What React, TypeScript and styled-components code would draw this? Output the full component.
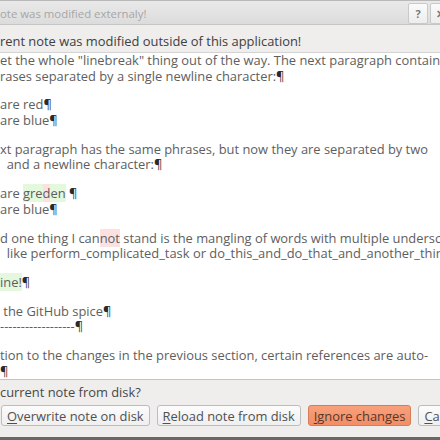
import React from 'react';
import styled, { createGlobalStyle } from 'styled-components';

const GlobalStyle = createGlobalStyle`
  html, body {
    margin: 0;
    padding: 0;
    background: #efeeec;
  }
  body {
    font-family: "Open Sans", "Noto Sans", sans-serif;
    font-size: 12.9px;
    color: #444444;
  }
`;

const Dialog = styled.div`
  width: 440px;
  height: 440px;
  overflow: hidden;
  display: flex;
  flex-direction: column;
  background: #efeeec;
`;

const TitleBar = styled.div`
  height: 23px;
  flex: none;
  display: flex;
  align-items: center;
  justify-content: space-between;
  border-top: 1px solid #b9b9b9;
  border-bottom: 1px solid #c6c6c6;
  background: linear-gradient(#e9e9e9, #dcdcdc);
`;

const Title = styled.span`
  font-size: 11.4px;
  color: #a6a6a6;
  white-space: nowrap;
  margin-top: 1px;
`;

const TitleButtons = styled.div`
  display: flex;
  gap: 2px;
  margin-right: -10px;
  margin-top: 2px;
`;

const TitleButton = styled.div`
  width: 18px;
  height: 19px;
  border: 1px solid #c9c9c9;
  border-radius: 2px;
  background: linear-gradient(#fbfbfb, #ededed);
  display: flex;
  align-items: center;
  justify-content: center;
  font-size: 11px;
  font-weight: 700;
  color: #7a7a7a;
`;

const Message = styled.div`
  flex: none;
  height: 27px;
  box-sizing: border-box;
  padding-top: 8px;
  line-height: 16px;
  white-space: nowrap;
  color: #404040;
`;

const Editor = styled.div`
  flex: none;
  height: 328px;
  box-sizing: border-box;
  background: #ffffff;
  border-top: 1px solid #d4d4d4;
  border-bottom: 1px solid #c4c4c4;
  overflow: hidden;
  display: flex;
  flex-direction: column;
  gap: 13.2px;
  color: #5e5e5e;
`;

const Paragraph = styled.div`
  display: flex;
  flex-direction: column;
`;

const Line = styled.div`
  line-height: 15.6px;
  white-space: pre;
`;

const Pilcrow = styled.span`
  color: #2a2a2a;
`;

const Mark = styled.span<{ $kind: 'add' | 'del' }>`
  background: ${(p) => (p.$kind === 'add' ? '#e4f8de' : '#fde1e1')};
`;

const Footer = styled.div`
  flex: 1;
  display: flex;
  flex-direction: column;
  padding-top: 4px;
  border-bottom: 3px solid #686868;
`;

const Question = styled.div`
  line-height: 16px;
  white-space: nowrap;
  color: #484848;
`;

const ButtonRow = styled.div`
  display: flex;
  gap: 7px;
  margin-top: 5px;
  padding-left: 1px;
`;

const Button = styled.div<{ $primary?: boolean }>`
  flex: none;
  height: 21px;
  box-sizing: border-box;
  padding: 0 5px;
  display: flex;
  align-items: center;
  white-space: nowrap;
  border-radius: 3px;
  border: 1px solid ${(p) => (p.$primary ? '#d47d5a' : '#bdbdbd')};
  background: ${(p) =>
    p.$primary ? 'linear-gradient(#f9a07c, #f28d66)' : 'linear-gradient(#fcfcfc, #efefef)'};
  color: ${(p) => (p.$primary ? '#55382b' : '#505050')};
  line-height: 16px;
`;

const Key = styled.span`
  text-decoration: underline;
  text-underline-offset: 2px;
`;

const P = () => <Pilcrow>¶</Pilcrow>;

export default function App() {
  return (
    <>
      <GlobalStyle />
      <Dialog>
        <TitleBar>
          <Title>ote was modified externaly!</Title>
          <TitleButtons>
            <TitleButton>?</TitleButton>
            <TitleButton>✕</TitleButton>
          </TitleButtons>
        </TitleBar>

        <Message>rent note was modified outside of this application!</Message>

        <Editor>
          <Paragraph>
            <Line>et the whole "linebreak" thing out of the way. The next paragraph contains two</Line>
            <Line>
              rases separated by a single newline character:<P />
            </Line>
          </Paragraph>
          <Paragraph>
            <Line>
              are red<P />
            </Line>
            <Line>
              are blue<P />
            </Line>
          </Paragraph>
          <Paragraph>
            <Line>xt paragraph has the same phrases, but now they are separated by two</Line>
            <Line>
              {'\u00a0\u00a0'}and a newline character:<P />
            </Line>
          </Paragraph>
          <Paragraph>
            <Line>
              are <Mark $kind="add">gre</Mark>
              <Mark $kind="del">d</Mark>
              <Mark $kind="add">en</Mark> <P />
            </Line>
            <Line>
              are blue<P />
            </Line>
          </Paragraph>
          <Paragraph>
            <Line>
              d one thing I can<Mark $kind="del">not</Mark> stand is the mangling of words with multiple underscores
            </Line>
            <Line>{'\u00a0\u00a0'}like perform_complicated_task or do_this_and_do_that_and_another_thing.</Line>
          </Paragraph>
          <Paragraph>
            <Line>
              <Mark $kind="add">ine!</Mark>
              <P />
            </Line>
          </Paragraph>
          <Paragraph>
            <Line>
              {'\u00a0'}the GitHub spice<P />
            </Line>
            <Line>
              ------------------<P />
            </Line>
          </Paragraph>
          <Paragraph>
            <Line>tion to the changes in the previous section, certain references are auto-</Line>
            <Line>
              <P />
            </Line>
          </Paragraph>
        </Editor>

        <Footer>
          <Question>current note from disk?</Question>
          <ButtonRow>
            <Button>
              <Key>O</Key>verwrite note on disk
            </Button>
            <Button>
              <Key>R</Key>eload note from disk
            </Button>
            <Button $primary>
              <Key>I</Key>gnore changes
            </Button>
            <Button>
              <Key>C</Key>ancel
            </Button>
          </ButtonRow>
        </Footer>
      </Dialog>
    </>
  );
}
